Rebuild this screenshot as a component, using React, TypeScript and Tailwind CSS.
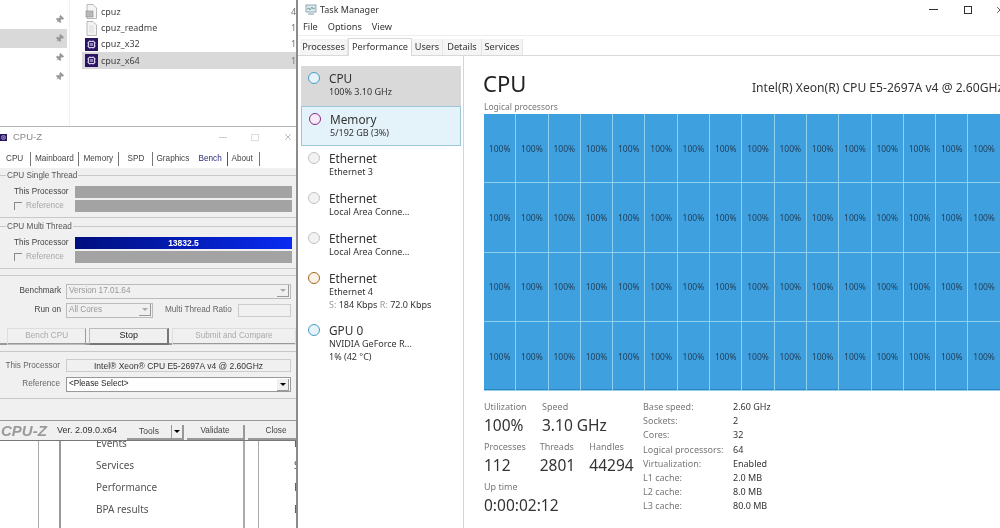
import { Pin, X } from "lucide-react";

const sans = "font-['Noto_Sans','Open_Sans',sans-serif]";

const files = [
    { name: "cpuz", date: "4/", icon: "zip", y: "h-[17px]" },
    { name: "cpuz_readme", date: "1/", icon: "doc", y: "h-[16px]" },
    { name: "cpuz_x32", date: "1/", icon: "exe", y: "h-[16px]" },
    { name: "cpuz_x64", date: "1/", icon: "exe", y: "h-[17px]", selected: true },
];

const tabs = [
    { label: "CPU", box: "w-[25px] pl-0" },
    { label: "Mainboard", box: "w-[47.5px] pl-[4px]" },
    { label: "Memory", box: "w-[40px] pl-[5px]" },
    { label: "SPD", box: "w-[34px] pl-[9px]" },
    { label: "Graphics", box: "w-[41px] pl-[4px]" },
    { label: "Bench", box: "w-[34px] pl-[5px]" },
    { label: "About", box: "w-[32px] pl-[4px]" },
];

const sidebar = [
    { title: "CPU", lines: ["100% 3.10 GHz"], ring: "border-[#4a9cc8] bg-[#e6f3fa]", row: "bg-[#d9d9d9] h-[40px]" },
    { title: "Memory", lines: ["5/192 GB (3%)"], ring: "border-[#8b2a8f] bg-[#f6ebf6]", row: "bg-[#e4f2fa] border border-[#9cc5d8] h-[40px]" },
    { title: "Ethernet", lines: ["Ethernet 3"], ring: "border-[#c4c4c4] bg-[#f2f2f2]", row: "h-[40px]" },
    { title: "Ethernet", lines: ["Local Area Conne..."], ring: "border-[#c4c4c4] bg-[#f2f2f2]", row: "h-[40px]" },
    { title: "Ethernet", lines: ["Local Area Conne..."], ring: "border-[#c4c4c4] bg-[#f2f2f2]", row: "h-[40px]" },
    { title: "Ethernet", lines: ["Ethernet 4"], speed: true, ring: "border-[#a7651c] bg-[#fbf3ea]", row: "h-[52px]" },
    { title: "GPU 0", lines: ["NVIDIA GeForce R...", "1% (42 °C)"], ring: "border-[#4a9cc8] bg-[#e6f3fa]", row: "h-[52px]" },
];

const specs = [
    ["Base speed:", "2.60 GHz"],
    ["Sockets:", "2"],
    ["Cores:", "32"],
    ["Logical processors:", "64"],
    ["Virtualization:", "Enabled"],
    ["L1 cache:", "2.0 MB"],
    ["L2 cache:", "8.0 MB"],
    ["L3 cache:", "80.0 MB"],
];

const cells = Array.from({ length: 64 }, (_, i) => i);

function ExeIcon({ className }: { className?: string }) {
    return (
        <svg viewBox="0 0 13 13" className={className}>
            <rect width="13" height="13" fill="#2a1563" />
            <rect x="3.5" y="3.5" width="6" height="6" rx="1" fill="none" stroke="#d9d2ee" strokeWidth="1.2" />
            <rect x="5" y="5" width="3" height="3" fill="#8f7fc4" />
            <path d="M2 5h1M2 8h1M10 5h1M10 8h1M5 2v1M8 2v1M5 10v1M8 10v1" stroke="#b9aede" strokeWidth="0.8" />
        </svg>
    );
}

function FileIcon({ kind }: { kind: string }) {
    if (kind === "exe") return <ExeIcon className="w-[13px] h-[13px]" />;
    return (
        <svg viewBox="0 0 13 15" className="w-[13px] h-[15px]">
            <path d="M2 .5h6l3.5 3.5v10.5H2z" fill="#f4f4f4" stroke="#a8a8a8" strokeWidth="0.8" />
            {kind === "zip" ? (
                <rect x="1" y="7" width="7" height="6" fill="#b9b9b9" stroke="#8a8a8a" strokeWidth="0.6" />
            ) : (
                <path d="M4 5h5M4 7h5M4 9h5M4 11h5" stroke="#d0d0d0" strokeWidth="0.7" />
            )}
        </svg>
    );
}

function Explorer() {
    return (
        <div className={`h-[127px] bg-white flex border-b border-[#b5b5b5] text-[#444] ${sans}`}>
            <div className="w-[70px] pt-[10px] border-r border-[#f1f1f1] shrink-0">
                {[0, 1, 2, 3].map((i) => (
                    <div key={i} className={`h-[19px] w-[67px] flex items-center justify-end pr-[3px] ${i === 1 ? "bg-[#d9d9d9]" : ""}`}>
                        <Pin className="w-[9px] h-[9px] text-[#999] fill-[#999] rotate-45" />
                    </div>
                ))}
            </div>
            <div className="flex-1 pl-[12px] pt-[3px]">
                {files.map((f) => (
                    <div key={f.name} className={`${f.y} flex items-center pl-[3px] text-[9px] ${f.selected ? "bg-[#d9d9d9]" : ""}`}>
                        <span className="w-[16px] flex justify-start shrink-0">
                            <FileIcon kind={f.icon} />
                        </span>
                        <span>{f.name}</span>
                        <span className="ml-auto text-[#777] w-[5px] overflow-hidden">{f.date}</span>
                    </div>
                ))}
            </div>
        </div>
    );
}

function BenchBar({ label, check, value }: { label: string; check?: boolean; value?: string }) {
    return (
        <div className="h-[14px] flex items-center">
            <div className={`w-[75px] shrink-0 flex items-center pl-[14px] ${check ? "text-[#a5a5a5]" : ""}`}>
                {check && <span className="w-[8px] h-[8px] border-l border-t border-[#888] mr-[4px] shrink-0" />}
                {label}
            </div>
            {value ? (
                <div className="w-[217px] h-[12px] bg-gradient-to-r from-[#000f7e] to-[#0a2bf2] text-white text-center text-[8.5px] font-bold leading-[12px]">
                    {value}
                </div>
            ) : (
                <div className="w-[217px] h-[12px] bg-[#a3a3a3]" />
            )}
        </div>
    );
}

function DropArrow({ dark }: { dark?: boolean }) {
    return (
        <span className="ml-auto w-[12px] h-[12px] mr-[1px] bg-[#f0f0f0] border-r border-b border-[#999] flex items-center justify-center">
            <span className={`w-0 h-0 border-x-[3px] border-x-transparent border-t-[3px] ${dark ? "border-t-black" : "border-t-[#aaa]"}`} />
        </span>
    );
}

function Group({ title, className, children }: { title: string; className: string; children: React.ReactNode }) {
    return (
        <div className={`relative border-t border-b border-[#c8c8c8] ${className}`}>
            <span className="absolute -top-[6px] left-[6px] bg-[#f0f0f0] px-[1px] leading-[12px] text-[#555]">{title}</span>
            {children}
        </div>
    );
}

function CpuZ() {
    return (
        <div className="h-[314px] bg-[#f0f0f0] flex flex-col text-[8.2px] text-[#444] font-['Liberation_Sans',sans-serif]">
            <div className="h-[20px] bg-white flex items-center shrink-0">
                <ExeIcon className="w-[7px] h-[11px]" />
                <span className="ml-[6px] text-[9.5px] text-[#888]">CPU-Z</span>
                <span className="ml-auto w-[8px] h-px bg-[#ccc] mr-[24px]" />
                <span className="w-[8px] h-[7px] border border-[#ddd] mr-[24px]" />
                <X className="w-[10px] h-[10px] text-[#aaa] mr-[3px]" />
            </div>
            <div className="h-[21px] flex items-center pl-[6px] bg-white shrink-0">
                {tabs.map((t) => (
                    <span
                        key={t.label}
                        className={`${t.box} h-[14px] mt-[2px] leading-[14px] whitespace-nowrap ${t.label === "Bench" ? "text-[#2b2b7a] border-r border-[#555]" : t.label === "Graphics" ? "" : "border-r border-[#777]"}`}
                    >
                        {t.label}
                    </span>
                ))}
            </div>
            <Group title="CPU Single Thread" className="mt-[7px] h-[43px] pt-[9px] shrink-0">
                <BenchBar label="This Processor" />
                <BenchBar label="Reference" check />
            </Group>
            <Group title="CPU Multi Thread" className="mt-[8px] h-[43px] pt-[9px] shrink-0">
                <BenchBar label="This Processor" value="13832.5" />
                <BenchBar label="Reference" check />
            </Group>
            <div className="mt-[6px] border-t border-[#c8c8c8] h-[70px] shrink-0 border-b-2 border-b-[#999]">
                <div className="mt-[7px] h-[16px] flex items-center">
                    <span className="w-[61px] text-right">Benchmark</span>
                    <div className="ml-[5px] w-[225px] h-[15px] bg-[#f0f0f0] border border-[#bbb] flex items-center pl-[2px] text-[#999]">
                        Version 17.01.64
                        <DropArrow />
                    </div>
                </div>
                <div className="mt-[3px] h-[16px] flex items-center">
                    <span className="w-[61px] text-right">Run on</span>
                    <div className="ml-[5px] w-[87px] h-[15px] bg-[#f0f0f0] border border-[#bbb] flex items-center pl-[2px] text-[#999]">
                        All Cores
                        <DropArrow />
                    </div>
                    <span className="ml-[12px] w-[73px] text-[#666] whitespace-nowrap">Multi Thread Ratio</span>
                    <div className="w-[53px] h-[13px] border border-[#ccc]" />
                </div>
                <div className="mt-[10px] flex pl-[7px] gap-[3px]">
                    <div className="w-[80px] h-[17px] border border-[#ddd] border-r-[#999] border-b-[#bbb] flex items-center justify-center text-[#aaa]">Bench CPU</div>
                    <div className="w-[80px] h-[17px] border border-[#bbb] border-r-2 border-b-2 border-r-[#777] border-b-[#777] flex items-center justify-center text-[#222] text-[9px]">Stop</div>
                    <div className="w-[125px] h-[17px] border border-[#ddd] flex items-center justify-center text-[#aaa]">Submit and Compare</div>
                </div>
            </div>
            <div className="mt-[6px] border-t border-b border-[#c8c8c8] h-[48px] shrink-0">
                <div className="mt-[6px] h-[14px] flex items-center">
                    <span className="w-[60px] text-right text-[#666] whitespace-nowrap pt-[2px]">This Processor</span>
                    <div className="ml-[6px] w-[225px] h-[13px] border border-[#ccc] text-center leading-[12px] text-[#333] text-[8.5px]">Intel® Xeon® CPU E5-2697A v4 @ 2.60GHz</div>
                </div>
                <div className="mt-[5px] h-[15px] flex items-center">
                    <span className="w-[60px] text-right text-[#666]">Reference</span>
                    <div className="ml-[6px] w-[225px] h-[15px] bg-white border border-[#999] flex items-center pl-[2px] text-[#222]">
                        &lt;Please Select&gt;
                        <DropArrow dark />
                    </div>
                </div>
            </div>
            <div className="mt-[21px] flex-1 border-t border-[#999] border-b border-b-[#777] flex items-center">
                <span className="w-[50px] pl-[1px] text-[15px] font-bold italic text-[#9a9a9a] leading-none">CPU-Z</span>
                <span className="ml-[7px] w-[70px] text-[9px] text-[#333]">Ver. 2.09.0.x64</span>
                <div className="w-[45px] h-[15px] border-b-2 border-r border-[#999] flex items-center justify-center text-[8.5px] mt-[3px]">Tools</div>
                <div className="w-[12px] h-[15px] border-b-2 border-r-2 border-[#999] flex items-center justify-center mt-[3px]">
                    <span className="w-0 h-0 border-x-[3px] border-x-transparent border-t-[3px] border-t-black" />
                </div>
                <div className="ml-[3px] w-[58px] h-[15px] border-b-2 border-r-2 border-[#999] flex items-center justify-center mt-[3px]">Validate</div>
                <div className="ml-[3px] w-[48px] h-[15px] border-b-2 border-[#999] flex items-center justify-center pl-[8px] mt-[3px]">Close</div>
            </div>
        </div>
    );
}

function BackWindow() {
    return (
        <div className={`h-[87px] flex bg-white text-[10px] text-[#555] overflow-hidden ${sans}`}>
            <div className="w-[39px] shrink-0 border-r border-[#aaa]" />
            <div className="w-[22px] shrink-0 border-r-2 border-[#9a9a9a]" />
            <div className="w-[184px] shrink-0 border-r-2 border-[#aaa] pl-[35px] -mt-[9px]">
                {["Events", "Services", "Performance", "BPA results"].map((t) => (
                    <div key={t} className="h-[22px] leading-[22px]">{t}</div>
                ))}
            </div>
            <div className="w-[14px] shrink-0 border-r border-[#aaa]" />
            <div className="flex-1 pl-[35px] -mt-[9px]">
                {["E", "S", "P", "B"].map((t) => (
                    <div key={t} className="h-[22px] leading-[22px]">{t}</div>
                ))}
            </div>
        </div>
    );
}

function Stat({ label, value, className }: { label: string; value: string; className: string }) {
    return (
        <div className={className}>
            <div className="text-[9px] leading-[12px] text-[#777]">{label}</div>
            <div className="text-[15.5px] leading-[22px] mt-[1px] text-[#333]">{value}</div>
        </div>
    );
}

function TaskManager() {
    return (
        <div className={`flex-1 min-w-0 h-[528px] bg-white flex flex-col overflow-hidden text-[#333] ${sans}`}>
            <div className="h-[19px] flex items-center pl-[7px] shrink-0">
                <svg viewBox="0 0 12 11" className="w-[12px] h-[11px]">
                    <rect x="1" y="1" width="10" height="7" fill="#dbeaf2" stroke="#7d96a6" strokeWidth="0.8" />
                    <path d="M2 5l2-1 1 2 2-3 1 2 2-1" fill="none" stroke="#5d8a5e" strokeWidth="0.7" />
                    <path d="M3 10h6" stroke="#7d96a6" />
                </svg>
                <span className="ml-[3px] text-[9px]">Task Manager</span>
                <span className="ml-auto w-[9px] h-px bg-[#333] mr-[26px]" />
                <span className="w-[8px] h-[8px] border border-[#333] mr-[23px]" />
                <X className="w-[10px] h-[10px] -mr-[5px]" />
            </div>
            <div className="h-[17px] flex items-center pl-[5px] gap-[10px] text-[9.2px] shrink-0 border-b border-[#eee]">
                <span>File</span>
                <span>Options</span>
                <span>View</span>
            </div>
            <div className="h-[20px] flex items-end pl-[2px] text-[9.2px] border-b border-[#d9d9d9] shrink-0">
                <span className="w-[48px] h-[16px] bg-[#f5f5f5] text-center leading-[16px] border-r border-[#e5e5e5]">Processes</span>
                <span className="w-[64px] h-[18px] bg-white border-x border-t border-[#d9d9d9] -mb-px text-center leading-[15px]">Performance</span>
                <span className="w-[31px] h-[16px] bg-[#f5f5f5] text-center leading-[16px] border-r border-[#e5e5e5]">Users</span>
                <span className="w-[39px] h-[16px] bg-[#f5f5f5] text-center leading-[16px] border-r border-[#e5e5e5]">Details</span>
                <span className="w-[41px] h-[16px] bg-[#f5f5f5] text-center leading-[16px] border-r border-[#e5e5e5]">Services</span>
            </div>
            <div className="flex flex-1 min-h-0">
                <div className="w-[166px] shrink-0 border-r border-[#d4d4d4] pt-[10px] pl-[3px]">
                    {sidebar.map((s, i) => (
                        <div key={i} className={`${s.row} w-[160px] flex pt-[5px]`}>
                            <span className={`w-[12px] h-[12px] rounded-full border ${s.ring} ml-[7px] mt-[1px] shrink-0`} />
                            <div className="ml-[9px]">
                                <div className="text-[11.8px] leading-[15px] text-[#333]">{s.title}</div>
                                {s.lines.map((l) => (
                                    <div key={l} className="text-[9px] leading-[12.5px]">{l}</div>
                                ))}
                                {s.speed && (
                                    <div className="text-[9px] leading-[12.5px]">
                                        <span className="text-[#999]">S:</span> 184 Kbps <span className="text-[#999]">R:</span> 72.0 Kbps
                                    </div>
                                )}
                            </div>
                        </div>
                    ))}
                </div>
                <div className="flex-1 min-w-0 pl-[19px] pt-[11px]">
                    <div className="h-[33px] flex items-end">
                        <span className="w-[269px] shrink-0 text-[22px] leading-[30px] text-[#222] mb-[2px]">CPU</span>
                        <span className="text-[12.1px] leading-[16px] whitespace-nowrap mb-[4px]">Intel(R) Xeon(R) CPU E5-2697A v4 @ 2.60GHz</span>
                    </div>
                    <div className="text-[8.5px] leading-[11px] text-[#777] mt-[1px] ml-[1px] h-[13px]">Logical processors</div>
                    <div className="ml-[1px] w-[517px] h-[277px] grid grid-cols-[repeat(16,32.3px)] grid-rows-[repeat(4,69.25px)] bg-[#3fa0e0] border-b-2 border-[#2f86bd]">
                        {cells.map((c) => (
                            <div key={c} className="flex items-center justify-center pt-[2px] border-r border-b border-[#8fd0ee] text-[8.5px] text-[#1f3d55]">
                                100%
                            </div>
                        ))}
                    </div>
                    <div className="flex mt-[10px]">
                        <div className="w-[160px] shrink-0 pl-[1px]">
                            <div className="flex">
                                <Stat label="Utilization" value="100%" className="w-[58px]" />
                                <Stat label="Speed" value="3.10 GHz" className="w-[100px]" />
                            </div>
                            <div className="flex mt-[5px]">
                                <Stat label="Processes" value="112" className="w-[56px]" />
                                <Stat label="Threads" value="2801" className="w-[50px]" />
                                <Stat label="Handles" value="44294" className="w-[54px]" />
                            </div>
                            <Stat label="Up time" value="0:00:02:12" className="mt-[5px]" />
                        </div>
                        <div className="-mt-[1px]">
                            {specs.map(([k, v]) => (
                                <div key={k} className="h-[14.2px] flex text-[9px] leading-[14.2px]">
                                    <span className="w-[90px] text-[#777]">{k}</span>
                                    <span className="text-[#333]">{v}</span>
                                </div>
                            ))}
                        </div>
                    </div>
                </div>
            </div>
        </div>
    );
}

export default function App() {
    return (
        <div className="relative w-[1000px] h-[528px] flex overflow-hidden bg-white blur-[0.25px]">
            <div className="w-[298px] shrink-0 flex flex-col border-r-2 border-[#8c8c8c]">
                <Explorer />
                <CpuZ />
                <BackWindow />
            </div>
            <TaskManager />
        </div>
    );
}
